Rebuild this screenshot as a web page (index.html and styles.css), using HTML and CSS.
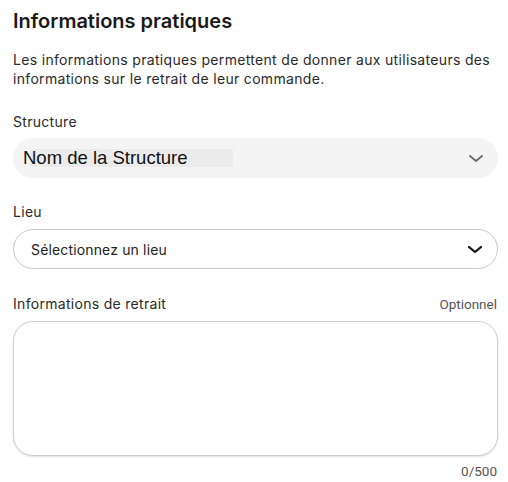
FILE: index.html
```html
<!DOCTYPE html>
<html lang="fr">
<head>
<meta charset="utf-8">
<link rel="stylesheet" href="styles.css">
</head>
<body>
<section class="panel">
  <h1 class="title">Informations pratiques</h1>
  <p class="desc">Les informations pratiques permettent de donner aux utilisateurs des informations sur le retrait de leur commande.</p>

  <div class="field">
    <div class="label-row label-row-tight"><span class="label">Structure</span></div>
    <div class="select select-disabled">
      <span class="value-struct">Nom de la Structure</span>
      <svg class="chev" viewBox="0 0 14 7" width="14" height="7"><path d="M1 1l6 5 6-5" fill="none" stroke="#6a6a6a" stroke-width="1.8" stroke-linecap="round" stroke-linejoin="round"/></svg>
    </div>
  </div>

  <div class="field">
    <div class="label-row"><span class="label">Lieu</span></div>
    <div class="select select-outline">
      <span class="value">Sélectionnez un lieu</span>
      <svg class="chev" viewBox="0 0 14 7" width="14" height="7"><path d="M1 1l6 5 6-5" fill="none" stroke="#111" stroke-width="2.2" stroke-linecap="round" stroke-linejoin="round"/></svg>
    </div>
  </div>

  <div class="field field-last">
    <div class="label-row"><span class="label">Informations de retrait</span><span class="optional">Optionnel</span></div>
    <div class="textarea"></div>
    <div class="counter">0/500</div>
  </div>
</section>
</body>
</html>
```
FILE: styles.css
```css
html, body {
  margin: 0;
  padding: 0;
  background: #fff;
}
body {
  font-family: Inter, Roboto, "Liberation Sans", sans-serif;
  color: #222;
}
.panel {
  padding: 8px 10px 0 13px;
}
.title {
  margin: 0;
  font-size: 20px;
  font-weight: 600;
  line-height: 26px;
  color: #1a1a1a;
  letter-spacing: 0;
}
.desc {
  margin: 16px 0 0;
  font-size: 14px;
  line-height: 19px;
  color: #2a2a2a;
  letter-spacing: 0.32px;
}
.field {
  margin-top: 25px;
}
.field-last {
  margin-top: 26px;
}
.label-row {
  display: flex;
  justify-content: space-between;
  align-items: baseline;
  margin-bottom: 8px;
}
.label-row-tight {
  margin-bottom: 7px;
}
.label {
  font-size: 14px;
  line-height: 18px;
  color: #2a2a2a;
  letter-spacing: 0.3px;
}
.optional {
  font-family: Roboto, sans-serif;
  font-size: 13.5px;
  color: #555;
  padding-right: 1px;
}
.select {
  box-sizing: border-box;
  height: 40px;
  border-radius: 20px;
  display: flex;
  align-items: center;
  justify-content: space-between;
  padding: 0 15px 0 17px;
}
.select-disabled {
  background: #f4f4f4;
  padding-left: 10px;
}
.select-outline {
  border: 1px solid #c9c9c9;
  background: #fff;
}
.value-struct {
  font-family: "Liberation Sans", Arial, sans-serif;
  font-size: 18.5px;
  color: #111;
  background: #ebebeb;
  width: 203px;
  line-height: 18px;
  margin-left: 7px;
  text-indent: -7px;
}
.value {
  font-size: 14px;
  color: #222;
  letter-spacing: 0.15px;
}
.chev {
  display: block;
  flex: none;
}
.textarea {
  box-sizing: border-box;
  height: 135px;
  border: 1px solid #cfcfcf;
  border-radius: 20px;
  background: #fff;
  box-shadow: 0 1px 2px rgba(0,0,0,0.12);
}
.counter {
  font-family: Roboto, sans-serif;
  text-align: right;
  font-size: 13.5px;
  color: #555;
  margin-top: 7px;
  padding-right: 1px;
}
```
